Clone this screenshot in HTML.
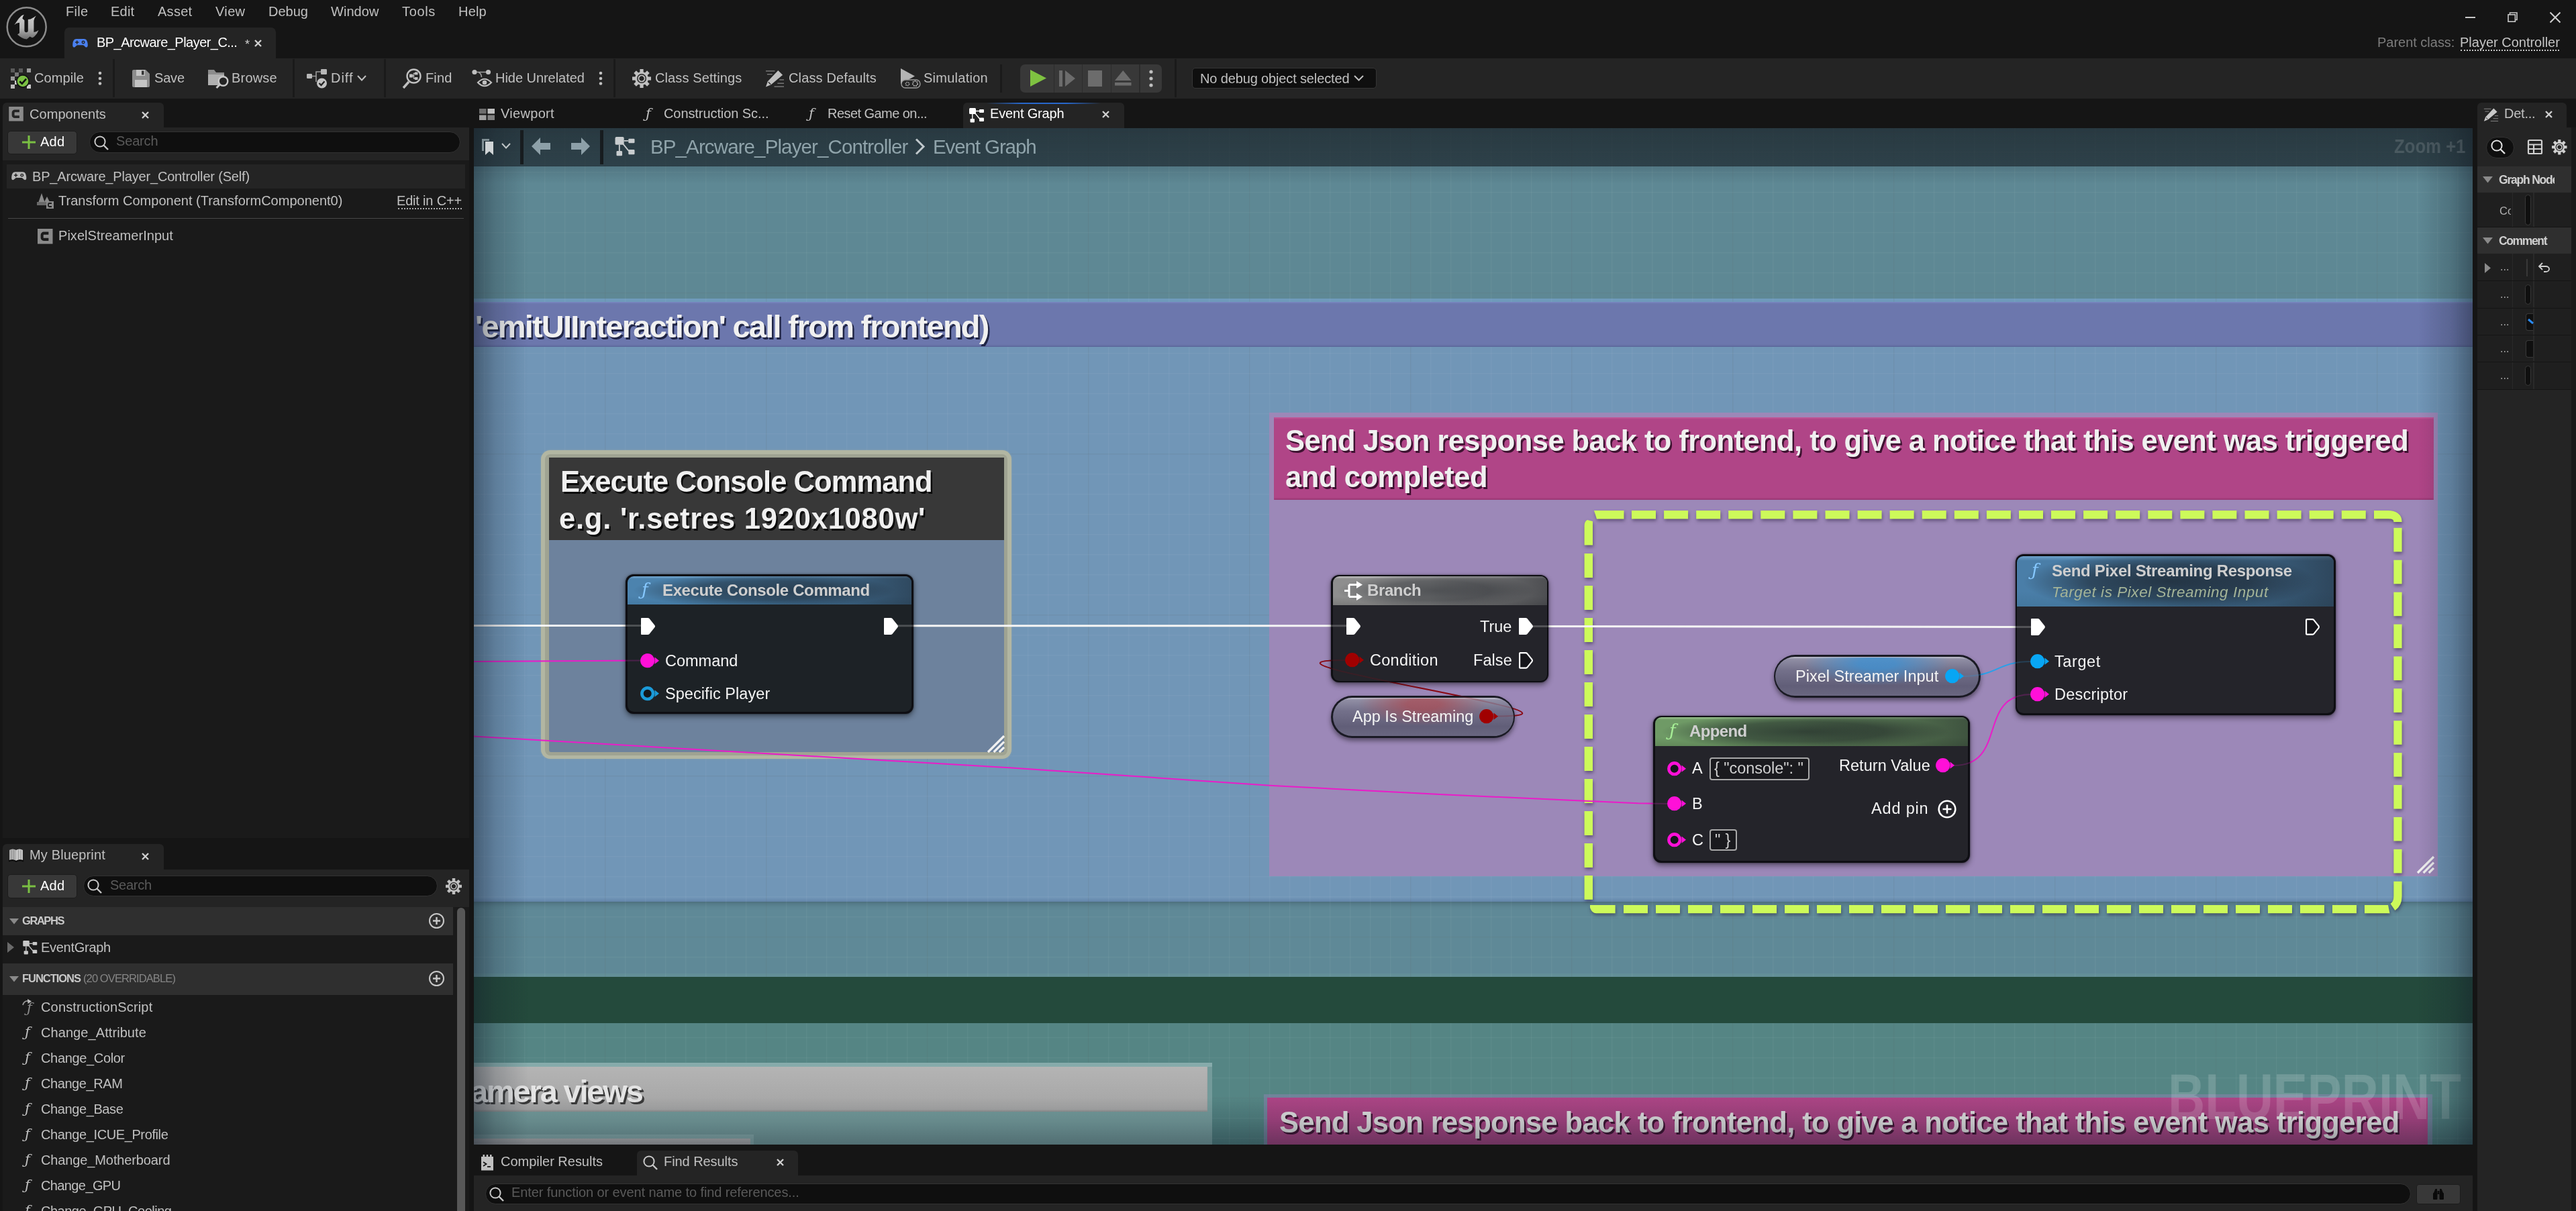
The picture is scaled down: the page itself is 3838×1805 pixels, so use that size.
<!DOCTYPE html>
<html><head><meta charset="utf-8"><title>BP_Arcware_Player_Controller</title>
<style>
html,body{margin:0;padding:0;background:#151515;}
body{width:3838px;height:1805px;position:relative;overflow:hidden;font-family:"Liberation Sans",sans-serif;}
.a{position:absolute;box-sizing:border-box;}
.t{position:absolute;white-space:pre;font-family:"Liberation Sans",sans-serif;will-change:transform;}
svg{overflow:visible;}
</style></head><body>
<div class="a" style="left:0px;top:0px;width:3838px;height:87px;background:#151515;"></div>
<svg class="a" style="left:4px;top:4px;" width="72" height="72" viewBox="0 0 72 72"><defs><linearGradient id="lg1" x1="0" y1="0" x2="0" y2="1"><stop offset="0" stop-color="#d0d0d0"/><stop offset="0.55" stop-color="#b4b4b4"/><stop offset="1" stop-color="#6e6e6e"/></linearGradient></defs>
<circle cx="35.7" cy="36.3" r="29" fill="#151515" stroke="#8c8c8c" stroke-width="2.5"/>
<path d="M17.2 33.3 L20.2 29.1 Q24 23 27.9 19.6 Q30 18 31.8 17.7 Q29.6 21 29.4 23.8 L32.4 26.2 V41.6 Q32.6 44.3 35.1 44.3 Q37.8 44.3 37.8 41.6 V25 L41.6 24.4 Q46 22.5 49.9 19.6 Q46.6 23.5 46.4 26.8 V44 Q50.5 43.5 53.5 41 Q51.5 46.5 47.6 49.9 Q45.8 51.6 44 52.3 L40.4 50.5 Q38 53 35.7 54.4 Q31.5 54.2 28.5 52.3 Q24.5 50 22 47.6 L25 45.2 V29.7 Q22.6 29.9 20.2 30.9 Z" fill="url(#lg1)"/></svg>
<span class="t" style="left:98.20px;top:7.07px;font-size:20px;line-height:20px;color:#c0c0c0;letter-spacing:0.293px;">File</span>
<span class="t" style="left:165.20px;top:7.07px;font-size:20px;line-height:20px;color:#c0c0c0;letter-spacing:0.234px;">Edit</span>
<span class="t" style="left:235.20px;top:7.07px;font-size:20px;line-height:20px;color:#c0c0c0;letter-spacing:0.276px;">Asset</span>
<span class="t" style="left:321.20px;top:7.07px;font-size:20px;line-height:20px;color:#c0c0c0;letter-spacing:0.353px;">View</span>
<span class="t" style="left:400.20px;top:7.07px;font-size:20px;line-height:20px;color:#c0c0c0;letter-spacing:-0.008px;">Debug</span>
<span class="t" style="left:493.20px;top:7.07px;font-size:20px;line-height:20px;color:#c0c0c0;letter-spacing:0.044px;">Window</span>
<span class="t" style="left:599.20px;top:7.07px;font-size:20px;line-height:20px;color:#c0c0c0;letter-spacing:0.642px;">Tools</span>
<span class="t" style="left:683.20px;top:7.07px;font-size:20px;line-height:20px;color:#c0c0c0;letter-spacing:0.191px;">Help</span>
<div class="a" style="left:96px;top:41px;width:315px;height:47px;background:#242424;border-radius:7px 7px 0 0;"></div>
<svg class="a" style="left:108px;top:57px;" width="23" height="14.5" viewBox="0 0 24 15"><path d="M6 1 H18 C21.5 1 23 4 23.6 8 C24.2 12 23.5 14 21.5 14 C19.5 14 18.5 11 16.5 10.5 H7.5 C5.5 11 4.5 14 2.5 14 C0.5 14 -0.2 12 0.4 8 C1 4 2.5 1 6 1 Z" fill="#4a80f0"/><path d="M6.2 3.5 v2 h-2 v1.6 h2 v2 h1.6 v-2 h2 v-1.6 h-2 v-2 z" fill="#242424"/><circle cx="16.8" cy="6.3" r="2.6" fill="#242424"/><circle cx="16.8" cy="6.3" r="1.1" fill="#4a80f0"/></svg>
<span class="t" style="left:144.20px;top:53.07px;font-size:20px;line-height:20px;color:#ffffff;letter-spacing:-0.537px;">BP_Arcware_Player_C...</span>
<span class="t" style="left:365.00px;top:56.76px;font-size:18px;line-height:18px;color:#d0d0d0;">*</span>
<svg class="a" style="left:379.5px;top:59.5px;" width="9.0" height="9.0" viewBox="0 0 9.0 9.0"><path d="M0 0 L9.0 9.0 M9.0 0 L0 9.0" stroke="#d0d0d0" stroke-width="2.4" fill="none"/></svg>
<svg class="a" style="left:3673px;top:25px;" width="15" height="2" viewBox="0 0 15 2"><rect width="15" height="2" fill="#c8c8c8"/></svg>
<svg class="a" style="left:3736px;top:18px;" width="15" height="15" viewBox="0 0 15 15"><path d="M3.5 3.5 V1 H14 V11.5 H11.5" fill="none" stroke="#c8c8c8" stroke-width="1.6"/><rect x="1" y="3.8" width="10.4" height="10.4" fill="none" stroke="#c8c8c8" stroke-width="1.6"/></svg>
<svg class="a" style="left:3799px;top:18px;" width="16" height="16" viewBox="0 0 16 16"><path d="M0.5 0.5 L15.5 15.5 M15.5 0.5 L0.5 15.5" stroke="#d0d0d0" stroke-width="2" fill="none"/></svg>
<span class="t" style="left:3541.70px;top:53.07px;font-size:20px;line-height:20px;color:#7c7c7c;letter-spacing:-0.016px;">Parent class:</span>
<span class="t" style="left:3665.20px;top:53.07px;font-size:20px;line-height:20px;color:#c4c4c4;letter-spacing:-0.003px;">Player Controller</span>
<div class="a" style="left:3666px;top:74px;width:147px;height:0px;background:transparent;border-top:2px dotted #c4c4c4;"></div>
<div class="a" style="left:0px;top:87px;width:3838px;height:60px;background:#242424;"></div>
<div class="a" style="left:168.0px;top:88px;width:3px;height:57px;background:#1a1a1a;"></div>
<div class="a" style="left:436.0px;top:88px;width:3px;height:57px;background:#1a1a1a;"></div>
<div class="a" style="left:571.5px;top:88px;width:3px;height:57px;background:#1a1a1a;"></div>
<div class="a" style="left:914.0px;top:88px;width:3px;height:57px;background:#1a1a1a;"></div>
<div class="a" style="left:1749.5px;top:88px;width:3px;height:57px;background:#1a1a1a;"></div>
<div class="a" style="left:1489.5px;top:96px;width:3px;height:42px;background:#1a1a1a;"></div>
<svg class="a" style="left:16px;top:102px;" width="30" height="30" viewBox="0 0 30 30"><g fill="#9a9a9a"><rect x="0" y="0" width="6" height="6" fill="#5a5a5a"/><rect x="12" y="0" width="6" height="6" fill="#5a5a5a"/><rect x="24" y="0" width="6" height="6"/><rect x="6" y="6" width="6" height="6" fill="#777"/><rect x="0" y="12" width="6" height="6"/><rect x="0" y="24" width="6" height="6" fill="#bbb"/><rect x="24" y="24" width="6" height="6" fill="#ccc"/><rect x="6" y="18" width="6" height="6" fill="#ccc"/></g>
<circle cx="18" cy="19" r="10" fill="#111"/><circle cx="18" cy="19" r="8.3" fill="#7ac043"/><path d="M13.3 19.3 L16.8 22.6 L23 15.6" fill="none" stroke="#111" stroke-width="2.6"/></svg>
<span class="t" style="left:51.20px;top:105.57px;font-size:20px;line-height:20px;color:#c0c0c0;letter-spacing:0.077px;">Compile</span>
<svg class="a" style="left:145.5px;top:106px;" width="6" height="21.5" viewBox="0 0 6 21.5"><circle cx="3" cy="3" r="2.3" fill="#c0c0c0"/><circle cx="3" cy="11" r="2.3" fill="#c0c0c0"/><circle cx="3" cy="18.5" r="2.3" fill="#c0c0c0"/></svg>
<svg class="a" style="left:197px;top:104px;" width="26" height="26" viewBox="0 0 26 26"><path d="M0 2 a2 2 0 0 1 2 -2 H20 L26 6 V24 a2 2 0 0 1 -2 2 H2 a2 2 0 0 1 -2 -2 Z" fill="#8c8c8c"/><rect x="6" y="0" width="13" height="9" fill="#c4c4c4"/><rect x="14" y="1.5" width="3.5" height="6" fill="#333"/><rect x="4" y="15" width="18" height="11" fill="#c4c4c4"/></svg>
<span class="t" style="left:230.20px;top:105.57px;font-size:20px;line-height:20px;color:#c0c0c0;letter-spacing:-0.172px;">Save</span>
<svg class="a" style="left:309.5px;top:101px;" width="31" height="31" viewBox="0 0 31 31"><path d="M0 3 H9 L12 7 H24 V26 H0 Z" fill="#8c8c8c"/><path d="M0 10 H24 V26 H0 Z" fill="#b0b0b0"/><circle cx="22.5" cy="20" r="6.8" fill="#242424" stroke="#c8c8c8" stroke-width="2.4"/><path d="M17.5 25 L12.5 30" stroke="#c8c8c8" stroke-width="3"/></svg>
<span class="t" style="left:345.20px;top:105.57px;font-size:20px;line-height:20px;color:#c0c0c0;letter-spacing:0.202px;">Browse</span>
<svg class="a" style="left:457px;top:102px;" width="31" height="30" viewBox="0 0 31 30"><rect x="0" y="8" width="8" height="7" rx="1.2" fill="#b8b8b8"/><rect x="21" y="1" width="9" height="8" rx="1.2" fill="#b8b8b8"/><path d="M8 11.5 H14 V5 H21" stroke="#9a9a9a" stroke-width="1.6" fill="none"/><path d="M14 11.5 V20" stroke="#9a9a9a" stroke-width="1.6"/><circle cx="22.5" cy="22" r="7.5" fill="#c4c4c4"/><path d="M18.5 22 L21.5 25 L26.5 19.2" stroke="#242424" stroke-width="2.4" fill="none"/></svg>
<span class="t" style="left:492.70px;top:105.57px;font-size:20px;line-height:20px;color:#c0c0c0;letter-spacing:0.940px;">Diff</span>
<svg class="a" style="left:532px;top:112px;" width="14" height="9" viewBox="0 0 14 9"><path d="M1 1 L7 7.5 L13 1" stroke="#c0c0c0" stroke-width="2" fill="none"/></svg>
<svg class="a" style="left:599.5px;top:102px;" width="28" height="30" viewBox="0 0 28 30"><circle cx="16.5" cy="11.5" r="10" fill="none" stroke="#c0c0c0" stroke-width="2.4"/><path d="M9 20 L1 29" stroke="#c0c0c0" stroke-width="3.4"/><rect x="10" y="8.5" width="5" height="5" fill="#c0c0c0"/><rect x="18" y="5.5" width="4.5" height="4" fill="#c0c0c0"/><rect x="18" y="13" width="4.5" height="4" fill="#c0c0c0"/><path d="M15 11 H16.5 V7.5 H18 M16.5 11 V15 H18" stroke="#c0c0c0" stroke-width="1.3" fill="none"/></svg>
<span class="t" style="left:634.20px;top:105.57px;font-size:20px;line-height:20px;color:#c0c0c0;letter-spacing:0.123px;">Find</span>
<svg class="a" style="left:703px;top:103px;" width="30" height="28" viewBox="0 0 30 28"><circle cx="4" cy="4.5" r="3.6" fill="#c0c0c0"/><circle cx="24.5" cy="4.5" r="3.6" fill="#c0c0c0"/><path d="M7 4.5 H21 M10 5 Q14 6 14.5 12" stroke="#a0a0a0" stroke-width="1.6" fill="none"/><path d="M9 20 Q19 9.5 29 20 Q19 30.5 9 20 Z" fill="none" stroke="#c0c0c0" stroke-width="2.2"/><circle cx="19" cy="20" r="3.3" fill="#c0c0c0"/></svg>
<span class="t" style="left:738.20px;top:105.57px;font-size:20px;line-height:20px;color:#c0c0c0;letter-spacing:-0.037px;">Hide Unrelated</span>
<svg class="a" style="left:891.5px;top:106px;" width="6" height="21.5" viewBox="0 0 6 21.5"><circle cx="3" cy="3" r="2.3" fill="#c0c0c0"/><circle cx="3" cy="11" r="2.3" fill="#c0c0c0"/><circle cx="3" cy="18.5" r="2.3" fill="#c0c0c0"/></svg>
<svg class="a" style="left:942px;top:103px;" width="28" height="28" viewBox="0 0 28 28"><g transform="translate(14 14)" fill="#c0c0c0"><rect x="-2.6" y="-14" width="5.2" height="6" transform="rotate(0)" /><rect x="-2.6" y="-14" width="5.2" height="6" transform="rotate(45)" /><rect x="-2.6" y="-14" width="5.2" height="6" transform="rotate(90)" /><rect x="-2.6" y="-14" width="5.2" height="6" transform="rotate(135)" /><rect x="-2.6" y="-14" width="5.2" height="6" transform="rotate(180)" /><rect x="-2.6" y="-14" width="5.2" height="6" transform="rotate(225)" /><rect x="-2.6" y="-14" width="5.2" height="6" transform="rotate(270)" /><rect x="-2.6" y="-14" width="5.2" height="6" transform="rotate(315)" /><circle r="10"/><circle r="7" fill="#242424"/><circle r="4.6" fill="none" stroke="#c0c0c0" stroke-width="1.8"/></g></svg>
<span class="t" style="left:975.70px;top:105.57px;font-size:20px;line-height:20px;color:#c0c0c0;letter-spacing:0.112px;">Class Settings</span>
<svg class="a" style="left:1140px;top:103px;" width="29" height="28" viewBox="0 0 30 29"><path d="M20 2 L27 9 L9 24 L1 27.5 L4 19 Z" fill="#c0c0c0"/><path d="M5 20 L8.5 23.5" stroke="#242424" stroke-width="1.3"/><g stroke="#7a7a7a" stroke-width="1.5"><path d="M1 3 H15"/><path d="M3 8 H11"/><path d="M19 22 H29"/><path d="M14 27 H29"/><path d="M22 16.5 H29"/></g></svg>
<span class="t" style="left:1174.70px;top:105.57px;font-size:20px;line-height:20px;color:#c0c0c0;letter-spacing:0.140px;">Class Defaults</span>
<svg class="a" style="left:1340.5px;top:102px;" width="31" height="30" viewBox="0 0 31 30"><path d="M1 0 L22 11.5 L1 23 Z" fill="#b4b4b4"/><rect x="2" y="17" width="28" height="12" rx="6" fill="#242424" stroke="#9a9a9a" stroke-width="1.4"/><circle cx="11" cy="23" r="2.6" fill="none" stroke="#b4b4b4" stroke-width="1.5" stroke-dasharray="1.6 1"/><circle cx="22.5" cy="22.5" r="3.6" fill="none" stroke="#b4b4b4" stroke-width="1.8" stroke-dasharray="2 1.1"/></svg>
<span class="t" style="left:1376.20px;top:105.57px;font-size:20px;line-height:20px;color:#c0c0c0;letter-spacing:0.252px;">Simulation</span>
<div class="a" style="left:1520px;top:96px;width:211px;height:42px;background:#383838;border-radius:7px;"></div>
<div class="a" style="left:1569.5px;top:96px;width:1.5px;height:42px;background:#2c2c2c;"></div>
<div class="a" style="left:1611.5px;top:96px;width:1.5px;height:42px;background:#2c2c2c;"></div>
<div class="a" style="left:1654.5px;top:96px;width:1.5px;height:42px;background:#2c2c2c;"></div>
<div class="a" style="left:1697.0px;top:96px;width:1.5px;height:42px;background:#2c2c2c;"></div>
<svg class="a" style="left:1535px;top:104px;" width="24" height="25" viewBox="0 0 24 25"><path d="M0 0 L24 12.5 L0 25 Z" fill="#7fc241"/></svg>
<svg class="a" style="left:1578px;top:105px;" width="24" height="24" viewBox="0 0 24 24"><rect x="0" y="0" width="5" height="24" fill="#6c6c6c"/><path d="M9 0 L24 12 L9 24 Z" fill="#6c6c6c"/></svg>
<div class="a" style="left:1620.5px;top:105px;width:21.5px;height:24px;background:#6c6c6c;"></div>
<svg class="a" style="left:1660.5px;top:105px;" width="24.5" height="23" viewBox="0 0 24.5 23"><path d="M12.25 0 L24.5 15 H0 Z" fill="#6c6c6c"/><rect x="0" y="18" width="24.5" height="4.5" fill="#6c6c6c"/></svg>
<svg class="a" style="left:1711.5px;top:104px;" width="6" height="26" viewBox="0 0 6 26"><circle cx="3" cy="3" r="2.6" fill="#c0c0c0"/><circle cx="3" cy="13" r="2.6" fill="#c0c0c0"/><circle cx="3" cy="23" r="2.6" fill="#c0c0c0"/></svg>
<div class="a" style="left:1776px;top:100.5px;width:274.5px;height:31.5px;background:#0f0f0f;border:1.5px solid #353535;border-radius:5px;"></div>
<span class="t" style="left:1787.70px;top:107.07px;font-size:20px;line-height:20px;color:#c0c0c0;letter-spacing:-0.138px;">No debug object selected</span>
<svg class="a" style="left:2017px;top:112px;" width="15" height="9" viewBox="0 0 15 9"><path d="M1 1 L7.5 7.5 L14 1" stroke="#c0c0c0" stroke-width="2" fill="none"/></svg>
<div class="a" style="left:4px;top:153px;width:240px;height:38px;background:#242424;border-radius:6px 6px 0 0;"></div>
<svg class="a" style="left:13px;top:159px;" width="22" height="21.5" viewBox="0 0 22 22"><rect width="22" height="22" fill="#8a8a8a"/><path d="M16 6.5 H9 a2.5 2.5 0 0 0 -2.5 2.5 V13 a2.5 2.5 0 0 0 2.5 2.5 H16" fill="none" stroke="#242424" stroke-width="4"/><rect x="14.5" y="0" width="3" height="22" fill="#242424" opacity="0"/><rect x="17.5" y="9" width="4.5" height="4" fill="#242424" opacity="0"/></svg>
<span class="t" style="left:44.20px;top:160.07px;font-size:20px;line-height:20px;color:#c0c0c0;letter-spacing:0.050px;">Components</span>
<svg class="a" style="left:212.0px;top:166.5px;" width="9.0" height="9.0" viewBox="0 0 9.0 9.0"><path d="M0 0 L9.0 9.0 M9.0 0 L0 9.0" stroke="#d0d0d0" stroke-width="2.4" fill="none"/></svg>
<div class="a" style="left:4px;top:190px;width:695px;height:49px;background:#242424;"></div>
<div class="a" style="left:4px;top:239px;width:695px;height:1010px;background:#1a1a1a;"></div>
<div class="a" style="left:11px;top:194.5px;width:104px;height:35px;background:#383838;border-radius:5px;border:1px solid #1c1c1c;"></div>
<svg class="a" style="left:33px;top:202.0px;" width="20" height="20" viewBox="0 0 20 20"><path d="M10 0 V20 M0 10 H20" stroke="#7ac043" stroke-width="3"/></svg>
<span class="t" style="left:59.70px;top:201.27px;font-size:20px;line-height:20px;color:#ffffff;letter-spacing:0.271px;">Add</span>
<div class="a" style="left:133px;top:196px;width:553px;height:32px;background:#0f0f0f;border:1.5px solid #323232;border-radius:16.0px;"></div>
<svg class="a" style="left:140px;top:201.5px;" width="22" height="22" viewBox="0 0 22 22"><circle cx="9" cy="9" r="7.6" fill="none" stroke="#c8c8c8" stroke-width="2"/><path d="M14.5 14.5 L21 21" stroke="#c8c8c8" stroke-width="2.4"/></svg>
<span class="t" style="left:173.20px;top:200.37px;font-size:20px;line-height:20px;color:#5a5a5a;letter-spacing:-0.162px;">Search</span>
<div class="a" style="left:10px;top:245px;width:683px;height:35.5px;background:#242424;"></div>
<svg class="a" style="left:16.5px;top:255px;" width="22.5" height="14.5" viewBox="0 0 24 15"><path d="M6 1 H18 C21.5 1 23 4 23.6 8 C24.2 12 23.5 14 21.5 14 C19.5 14 18.5 11 16.5 10.5 H7.5 C5.5 11 4.5 14 2.5 14 C0.5 14 -0.2 12 0.4 8 C1 4 2.5 1 6 1 Z" fill="#b8b8b8"/><path d="M6.2 3.5 v2 h-2 v1.6 h2 v2 h1.6 v-2 h2 v-1.6 h-2 v-2 z" fill="#242424"/><circle cx="16.8" cy="6.3" r="2.6" fill="#242424"/><circle cx="16.8" cy="6.3" r="1.1" fill="#b8b8b8"/></svg>
<span class="t" style="left:48.20px;top:253.07px;font-size:20px;line-height:20px;color:#c0c0c0;letter-spacing:-0.178px;">BP_Arcware_Player_Controller (Self)</span>
<svg class="a" style="left:55px;top:288px;" width="25" height="24" viewBox="0 0 25 24"><path d="M7 0 L11.5 13 H2.5 Z" fill="#8a8a8a"/><path d="M15 5 L19 13 H11 Z" fill="#8a8a8a"/><rect x="0" y="13" width="14" height="5" fill="#6a6a6a"/><rect x="14" y="12" width="11" height="11" fill="#8a8a8a"/><path d="M22 15 H18.5 a1.5 1.5 0 0 0 -1.5 1.5 V18.5 a1.5 1.5 0 0 0 1.5 1.5 H22" fill="none" stroke="#1a1a1a" stroke-width="1.8"/></svg>
<span class="t" style="left:87.30px;top:288.77px;font-size:20px;line-height:20px;color:#c0c0c0;letter-spacing:0.007px;">Transform Component (TransformComponent0)</span>
<span class="t" style="left:591.20px;top:288.77px;font-size:20px;line-height:20px;color:#c0c0c0;letter-spacing:-0.186px;">Edit in C++</span>
<div class="a" style="left:592.5px;top:310px;width:95px;height:0px;background:transparent;border-top:2px dotted #b0b0b0;"></div>
<div class="a" style="left:12px;top:325px;width:679px;height:1px;background:#484848;"></div>
<svg class="a" style="left:56px;top:340.5px;" width="22.5" height="22.5" viewBox="0 0 22 22"><rect width="22" height="22" fill="#8a8a8a"/><path d="M16 6.5 H9 a2.5 2.5 0 0 0 -2.5 2.5 V13 a2.5 2.5 0 0 0 2.5 2.5 H16" fill="none" stroke="#1a1a1a" stroke-width="4"/><rect x="14.5" y="0" width="3" height="22" fill="#1a1a1a" opacity="0"/><rect x="17.5" y="9" width="4.5" height="4" fill="#1a1a1a" opacity="0"/></svg>
<span class="t" style="left:87.30px;top:340.77px;font-size:20px;line-height:20px;color:#c0c0c0;letter-spacing:0.045px;">PixelStreamerInput</span>
<div class="a" style="left:4px;top:1258px;width:240px;height:38px;background:#242424;border-radius:6px 6px 0 0;"></div>
<svg class="a" style="left:12.5px;top:1264px;" width="22" height="21" viewBox="0 0 22 21"><path d="M1 3 Q6 0 11 3 V19 Q6 16 1 19 Z" fill="#b0b0b0"/><path d="M21 3 Q16 0 11 3 V19 Q16 16 21 19 Z" fill="#c8c8c8"/><path d="M0 19.5 Q6 17 11 20 Q16 17 22 19.5" fill="none" stroke="#0a0a0a" stroke-width="2"/><g stroke="#8a8a8a" stroke-width="0.8"><path d="M4 3 V17 M7.5 2.6 V17 M14.5 2.6 V17 M18 3 V17"/></g></svg>
<span class="t" style="left:44.20px;top:1264.07px;font-size:20px;line-height:20px;color:#c0c0c0;letter-spacing:0.145px;">My Blueprint</span>
<svg class="a" style="left:212.0px;top:1271.5px;" width="9.0" height="9.0" viewBox="0 0 9.0 9.0"><path d="M0 0 L9.0 9.0 M9.0 0 L0 9.0" stroke="#d0d0d0" stroke-width="2.4" fill="none"/></svg>
<div class="a" style="left:4px;top:1295.5px;width:695px;height:56.5px;background:#242424;"></div>
<div class="a" style="left:4px;top:1352px;width:695px;height:453px;background:#1a1a1a;"></div>
<div class="a" style="left:11px;top:1303px;width:104px;height:36px;background:#383838;border-radius:5px;border:1px solid #1c1c1c;"></div>
<svg class="a" style="left:33px;top:1311.0px;" width="20" height="20" viewBox="0 0 20 20"><path d="M10 0 V20 M0 10 H20" stroke="#7ac043" stroke-width="3"/></svg>
<span class="t" style="left:59.70px;top:1310.27px;font-size:20px;line-height:20px;color:#ffffff;letter-spacing:0.271px;">Add</span>
<div class="a" style="left:124px;top:1305px;width:528px;height:31px;background:#0f0f0f;border:1.5px solid #323232;border-radius:15.5px;"></div>
<svg class="a" style="left:129.5px;top:1310.0px;" width="22" height="22" viewBox="0 0 22 22"><circle cx="9" cy="9" r="7.6" fill="none" stroke="#c8c8c8" stroke-width="2"/><path d="M14.5 14.5 L21 21" stroke="#c8c8c8" stroke-width="2.4"/></svg>
<span class="t" style="left:163.70px;top:1308.87px;font-size:20px;line-height:20px;color:#5a5a5a;letter-spacing:-0.245px;">Search</span>
<svg class="a" style="left:663.5px;top:1308.5px;" width="24" height="24" viewBox="0 0 28 28"><g transform="translate(14 14)" fill="#c0c0c0"><rect x="-2.6" y="-14" width="5.2" height="6" transform="rotate(0)" /><rect x="-2.6" y="-14" width="5.2" height="6" transform="rotate(45)" /><rect x="-2.6" y="-14" width="5.2" height="6" transform="rotate(90)" /><rect x="-2.6" y="-14" width="5.2" height="6" transform="rotate(135)" /><rect x="-2.6" y="-14" width="5.2" height="6" transform="rotate(180)" /><rect x="-2.6" y="-14" width="5.2" height="6" transform="rotate(225)" /><rect x="-2.6" y="-14" width="5.2" height="6" transform="rotate(270)" /><rect x="-2.6" y="-14" width="5.2" height="6" transform="rotate(315)" /><circle r="10"/><circle r="7" fill="#242424"/><circle r="4.6" fill="none" stroke="#c0c0c0" stroke-width="1.8"/></g></svg>
<div class="a" style="left:680.5px;top:1352.5px;width:12px;height:460px;background:#575757;border-radius:6px;"></div>
<div class="a" style="left:4px;top:1352px;width:670.5px;height:42px;background:#2f2f2f;"></div>
<svg class="a" style="left:14px;top:1369px;" width="14" height="8.5" viewBox="0 0 14 8.5"><path d="M0 0 H14 L7.0 8.5 Z" fill="#8a8a8a"/></svg>
<span class="t" style="left:32.93px;top:1364.03px;font-size:16.5px;line-height:16.5px;color:#c8c8c8;letter-spacing:-1.436px;font-weight:700;">GRAPHS</span>
<svg class="a" style="left:639.2px;top:1361.0px;" width="23.0" height="23.0" viewBox="0 0 23.0 23.0"><circle cx="11.5" cy="11.5" r="10.5" fill="none" stroke="#c8c8c8" stroke-width="2"/><path d="M11.5 6.0 V17.0 M6.0 11.5 H17.0" stroke="#c8c8c8" stroke-width="2.4"/></svg>
<svg class="a" style="left:11px;top:1402px;" width="10" height="20" viewBox="0 0 10 20"><path d="M0 2 L10 10 L0 18 Z" fill="#6a6a6a"/></svg>
<svg class="a" style="left:34px;top:1402px;" width="21.5" height="21" viewBox="0 0 22 22"><rect x="0" y="0" width="10" height="9" rx="1.5" fill="#c8c8c8"/><rect x="15" y="2" width="7" height="5" rx="1" fill="#c8c8c8"/><rect x="1.5" y="16" width="6.5" height="5.5" rx="1" fill="#c8c8c8"/><rect x="15" y="14.5" width="7" height="5.5" rx="1" fill="#c8c8c8"/><path d="M10 4.5 H15 M4.8 9 V16 M9 8 L15.5 16" stroke="#c8c8c8" stroke-width="1.4" fill="none"/></svg>
<span class="t" style="left:60.70px;top:1402.07px;font-size:20px;line-height:20px;color:#c0c0c0;letter-spacing:-0.283px;">EventGraph</span>
<div class="a" style="left:4px;top:1435.5px;width:670.5px;height:47px;background:#2f2f2f;"></div>
<svg class="a" style="left:14px;top:1455px;" width="14" height="8.5" viewBox="0 0 14 8.5"><path d="M0 0 H14 L7.0 8.5 Z" fill="#8a8a8a"/></svg>
<span class="t" style="left:32.93px;top:1449.83px;font-size:16.5px;line-height:16.5px;color:#c8c8c8;letter-spacing:-1.030px;font-weight:700;">FUNCTIONS</span>
<span class="t" style="left:123.93px;top:1449.83px;font-size:16.5px;line-height:16.5px;color:#858585;letter-spacing:-0.895px;">(20 OVERRIDABLE)</span>
<svg class="a" style="left:639.2px;top:1447.0px;" width="23.0" height="23.0" viewBox="0 0 23.0 23.0"><circle cx="11.5" cy="11.5" r="10.5" fill="none" stroke="#c8c8c8" stroke-width="2"/><path d="M11.5 6.0 V17.0 M6.0 11.5 H17.0" stroke="#c8c8c8" stroke-width="2.4"/></svg>
<svg class="a" style="left:33px;top:1488.7px;" width="14" height="10" viewBox="0 0 14 10"><path d="M1 9 Q3 2 10 3" fill="none" stroke="#9a9a9a" stroke-width="1.8"/><path d="M8 0 L14 3.5 L8.5 7 Z" fill="#c0c0c0"/></svg>
<span class="t" style="left:40.00px;top:1492.42px;font-size:21.0px;line-height:21.0px;color:#8a8a8a;font-style:italic;font-family:'DejaVu Serif','Liberation Serif',serif;">ƒ</span>
<span class="t" style="left:60.70px;top:1490.57px;font-size:20px;line-height:20px;color:#c0c0c0;letter-spacing:0.166px;">ConstructionScript</span>
<span class="t" style="left:37.00px;top:1528.42px;font-size:21.0px;line-height:21.0px;color:#c0c0c0;font-style:italic;font-family:'DejaVu Serif','Liberation Serif',serif;">ƒ</span>
<span class="t" style="left:60.70px;top:1528.57px;font-size:20px;line-height:20px;color:#c0c0c0;letter-spacing:0.077px;">Change_Attribute</span>
<span class="t" style="left:37.00px;top:1566.42px;font-size:21.0px;line-height:21.0px;color:#c0c0c0;font-style:italic;font-family:'DejaVu Serif','Liberation Serif',serif;">ƒ</span>
<span class="t" style="left:60.70px;top:1566.57px;font-size:20px;line-height:20px;color:#c0c0c0;letter-spacing:-0.340px;">Change_Color</span>
<span class="t" style="left:37.00px;top:1604.42px;font-size:21.0px;line-height:21.0px;color:#c0c0c0;font-style:italic;font-family:'DejaVu Serif','Liberation Serif',serif;">ƒ</span>
<span class="t" style="left:60.70px;top:1604.57px;font-size:20px;line-height:20px;color:#c0c0c0;letter-spacing:-0.423px;">Change_RAM</span>
<span class="t" style="left:37.00px;top:1642.42px;font-size:21.0px;line-height:21.0px;color:#c0c0c0;font-style:italic;font-family:'DejaVu Serif','Liberation Serif',serif;">ƒ</span>
<span class="t" style="left:60.70px;top:1642.57px;font-size:20px;line-height:20px;color:#c0c0c0;letter-spacing:-0.397px;">Change_Base</span>
<span class="t" style="left:37.00px;top:1680.42px;font-size:21.0px;line-height:21.0px;color:#c0c0c0;font-style:italic;font-family:'DejaVu Serif','Liberation Serif',serif;">ƒ</span>
<span class="t" style="left:60.70px;top:1680.57px;font-size:20px;line-height:20px;color:#c0c0c0;letter-spacing:-0.389px;">Change_ICUE_Profile</span>
<span class="t" style="left:37.00px;top:1718.42px;font-size:21.0px;line-height:21.0px;color:#c0c0c0;font-style:italic;font-family:'DejaVu Serif','Liberation Serif',serif;">ƒ</span>
<span class="t" style="left:60.70px;top:1718.57px;font-size:20px;line-height:20px;color:#c0c0c0;letter-spacing:-0.121px;">Change_Motherboard</span>
<span class="t" style="left:37.00px;top:1756.42px;font-size:21.0px;line-height:21.0px;color:#c0c0c0;font-style:italic;font-family:'DejaVu Serif','Liberation Serif',serif;">ƒ</span>
<span class="t" style="left:60.70px;top:1756.57px;font-size:20px;line-height:20px;color:#c0c0c0;letter-spacing:-0.613px;">Change_GPU</span>
<span class="t" style="left:37.00px;top:1794.42px;font-size:21.0px;line-height:21.0px;color:#c0c0c0;font-style:italic;font-family:'DejaVu Serif','Liberation Serif',serif;">ƒ</span>
<span class="t" style="left:60.70px;top:1794.57px;font-size:20px;line-height:20px;color:#c0c0c0;letter-spacing:-0.504px;">Change_GPU_Cooling</span>
<svg class="a" style="left:714px;top:162px;" width="23" height="17" viewBox="0 0 23 17"><rect x="0" y="0" width="10.5" height="7.5" fill="#6e6e6e"/><rect x="12.5" y="0" width="10.5" height="7.5" fill="#c0c0c0"/><rect x="0" y="9.5" width="10.5" height="7.5" fill="#a0a0a0"/><rect x="12.5" y="9.5" width="10.5" height="7.5" fill="#808080"/></svg>
<span class="t" style="left:746.20px;top:159.07px;font-size:20px;line-height:20px;color:#c0c0c0;letter-spacing:0.306px;">Viewport</span>
<span class="t" style="left:962.00px;top:158.72px;font-size:21.0px;line-height:21.0px;color:#c0c0c0;font-style:italic;font-family:'DejaVu Serif','Liberation Serif',serif;">ƒ</span>
<span class="t" style="left:988.70px;top:159.07px;font-size:20px;line-height:20px;color:#c0c0c0;letter-spacing:-0.080px;">Construction Sc...</span>
<span class="t" style="left:1205.00px;top:158.72px;font-size:21.0px;line-height:21.0px;color:#c0c0c0;font-style:italic;font-family:'DejaVu Serif','Liberation Serif',serif;">ƒ</span>
<span class="t" style="left:1232.70px;top:159.07px;font-size:20px;line-height:20px;color:#c0c0c0;letter-spacing:-0.553px;">Reset Game on...</span>
<div class="a" style="left:1435px;top:153px;width:240px;height:38px;background:#242424;border-radius:6px 6px 0 0;"></div>
<div class="a" style="left:1470px;top:153px;width:170px;height:1.5px;background:linear-gradient(90deg,rgba(40,110,220,0),rgba(40,110,220,.9) 30%,rgba(40,110,220,.9) 70%,rgba(40,110,220,0));"></div>
<svg class="a" style="left:1444px;top:160.5px;" width="22" height="22" viewBox="0 0 22 22"><rect x="0" y="0" width="10" height="9" rx="1.5" fill="#ffffff"/><rect x="15" y="2" width="7" height="5" rx="1" fill="#ffffff"/><rect x="1.5" y="16" width="6.5" height="5.5" rx="1" fill="#ffffff"/><rect x="15" y="14.5" width="7" height="5.5" rx="1" fill="#ffffff"/><path d="M10 4.5 H15 M4.8 9 V16 M9 8 L15.5 16" stroke="#ffffff" stroke-width="1.4" fill="none"/></svg>
<span class="t" style="left:1474.70px;top:159.07px;font-size:20px;line-height:20px;color:#ffffff;letter-spacing:-0.172px;">Event Graph</span>
<svg class="a" style="left:1643.0px;top:166.0px;" width="9.0" height="9.0" viewBox="0 0 9.0 9.0"><path d="M0 0 L9.0 9.0 M9.0 0 L0 9.0" stroke="#d0d0d0" stroke-width="2.4" fill="none"/></svg>
<div class="a" style="left:3691px;top:153px;width:133px;height:38px;background:#242424;border-radius:6px 6px 0 0;"></div>
<svg class="a" style="left:3699.5px;top:160px;" width="23" height="22" viewBox="0 0 30 29"><path d="M20 2 L27 9 L9 24 L1 27.5 L4 19 Z" fill="#c8c8c8"/><path d="M5 20 L8.5 23.5" stroke="#242424" stroke-width="1.3"/><g stroke="#7a7a7a" stroke-width="1.5"><path d="M1 3 H15"/><path d="M3 8 H11"/><path d="M19 22 H29"/><path d="M14 27 H29"/><path d="M22 16.5 H29"/></g></svg>
<span class="t" style="left:3731.40px;top:159.07px;font-size:20px;line-height:20px;color:#c0c0c0;letter-spacing:-0.233px;">Det...</span>
<svg class="a" style="left:3792.9px;top:166.0px;" width="9.0" height="9.0" viewBox="0 0 9.0 9.0"><path d="M0 0 L9.0 9.0 M9.0 0 L0 9.0" stroke="#d0d0d0" stroke-width="2.4" fill="none"/></svg>
<div class="a" style="left:3691px;top:190px;width:140px;height:1615px;background:#242424;"></div>
<div class="a" style="left:3831px;top:190px;width:7px;height:1615px;background:#1a1a1a;"></div>
<div class="a" style="left:3703.5px;top:203.5px;width:42.5px;height:32px;background:#0f0f0f;border:1.5px solid #323232;border-radius:16px;"></div>
<svg class="a" style="left:3711px;top:208px;" width="22" height="22" viewBox="0 0 22 22"><circle cx="9" cy="9" r="7.6" fill="none" stroke="#e0e0e0" stroke-width="2"/><path d="M14.5 14.5 L21 21" stroke="#e0e0e0" stroke-width="2.4"/></svg>
<svg class="a" style="left:3766px;top:208px;" width="22" height="22" viewBox="0 0 22 22"><rect x="1" y="1" width="20" height="20" rx="1.5" fill="none" stroke="#d0d0d0" stroke-width="2.2"/><path d="M1 7.5 H21 M1 14 H21 M9 7.5 V21" stroke="#d0d0d0" stroke-width="2.2"/></svg>
<svg class="a" style="left:3802px;top:208px;" width="22.5" height="22.5" viewBox="0 0 28 28"><g transform="translate(14 14)" fill="#d0d0d0"><rect x="-2.6" y="-14" width="5.2" height="6" transform="rotate(0)" /><rect x="-2.6" y="-14" width="5.2" height="6" transform="rotate(45)" /><rect x="-2.6" y="-14" width="5.2" height="6" transform="rotate(90)" /><rect x="-2.6" y="-14" width="5.2" height="6" transform="rotate(135)" /><rect x="-2.6" y="-14" width="5.2" height="6" transform="rotate(180)" /><rect x="-2.6" y="-14" width="5.2" height="6" transform="rotate(225)" /><rect x="-2.6" y="-14" width="5.2" height="6" transform="rotate(270)" /><rect x="-2.6" y="-14" width="5.2" height="6" transform="rotate(315)" /><circle r="10"/><circle r="7" fill="#242424"/><circle r="4.6" fill="none" stroke="#d0d0d0" stroke-width="1.8"/></g></svg>
<div class="a" style="left:3691px;top:248px;width:140px;height:39px;background:#2f2f2f;"></div>
<svg class="a" style="left:3698.5px;top:263px;" width="15" height="9.5" viewBox="0 0 15 9.5"><path d="M0 0 H15 L7.5 9.5 Z" fill="#8a8a8a"/></svg>
<span class="t" style="left:3723.26px;top:259.68px;font-size:17.5px;line-height:17.5px;color:#d0d0d0;letter-spacing:-1.205px;font-weight:700;width:82.5px;overflow:hidden;">Graph Node</span>
<div class="a" style="left:3691px;top:287px;width:140px;height:51px;background:#1f1f1f;"></div>
<span class="t" style="left:3724.40px;top:306.03px;font-size:16.5px;line-height:16.5px;color:#b0b0b0;width:17px;overflow:hidden;">Comment</span>
<div class="a" style="left:3742.5px;top:287px;width:1.5px;height:51px;background:#2a2a2a;"></div>
<div class="a" style="left:3774px;top:287px;width:1.5px;height:51px;background:#2a2a2a;"></div>
<div class="a" style="left:3762px;top:290px;width:9px;height:46px;background:#0f0f0f;border:1.5px solid #383838;border-radius:5px;"></div>
<div class="a" style="left:3691px;top:337.5px;width:140px;height:1.5px;background:#151515;"></div>
<div class="a" style="left:3691px;top:339px;width:140px;height:39px;background:#2f2f2f;"></div>
<svg class="a" style="left:3698.5px;top:353.5px;" width="15" height="9.5" viewBox="0 0 15 9.5"><path d="M0 0 H15 L7.5 9.5 Z" fill="#8a8a8a"/></svg>
<span class="t" style="left:3723.26px;top:351.18px;font-size:17.5px;line-height:17.5px;color:#d0d0d0;letter-spacing:-1.371px;font-weight:700;">Comment</span>
<div class="a" style="left:3691px;top:378px;width:140px;height:41.39999999999998px;background:#1f1f1f;"></div>
<div class="a" style="left:3691px;top:417.9px;width:140px;height:1.5px;background:#151515;"></div>
<div class="a" style="left:3742.5px;top:378px;width:1.5px;height:39.89999999999998px;background:#2a2a2a;"></div>
<div class="a" style="left:3774px;top:378px;width:1.5px;height:39.89999999999998px;background:#2a2a2a;"></div>
<span class="t" style="left:3724.50px;top:390.15px;font-size:16px;line-height:16px;color:#b0b0b0;">...</span>
<svg class="a" style="left:3702px;top:392px;" width="9" height="15" viewBox="0 0 9 15"><path d="M0 0 L9 7.5 L0 15 Z" fill="#8a8a8a"/></svg>
<div class="a" style="left:3763.5px;top:386px;width:2px;height:26px;background:#383838;"></div>
<svg class="a" style="left:3782px;top:391px;" width="17" height="14" viewBox="0 0 17 14"><path d="M6 1 L1 6 L6 11 M1 6 H11 a5 4 0 0 1 0 8 H8" fill="none" stroke="#d0d0d0" stroke-width="1.8"/></svg>
<div class="a" style="left:3691px;top:419.4px;width:140px;height:40.60000000000002px;background:#1f1f1f;"></div>
<div class="a" style="left:3691px;top:458.5px;width:140px;height:1.5px;background:#151515;"></div>
<div class="a" style="left:3742.5px;top:419.4px;width:1.5px;height:39.10000000000002px;background:#2a2a2a;"></div>
<div class="a" style="left:3774px;top:419.4px;width:1.5px;height:39.10000000000002px;background:#2a2a2a;"></div>
<span class="t" style="left:3724.50px;top:431.15px;font-size:16px;line-height:16px;color:#b0b0b0;">...</span>
<div class="a" style="left:3762px;top:424.4px;width:9px;height:30px;background:#0f0f0f;border:1.5px solid #383838;border-radius:5px;"></div>
<div class="a" style="left:3691px;top:460px;width:140px;height:40.30000000000001px;background:#1f1f1f;"></div>
<div class="a" style="left:3691px;top:498.8px;width:140px;height:1.5px;background:#151515;"></div>
<div class="a" style="left:3742.5px;top:460px;width:1.5px;height:38.80000000000001px;background:#2a2a2a;"></div>
<div class="a" style="left:3774px;top:460px;width:1.5px;height:38.80000000000001px;background:#2a2a2a;"></div>
<span class="t" style="left:3724.50px;top:471.60px;font-size:16px;line-height:16px;color:#b0b0b0;">...</span>
<div class="a" style="left:3763px;top:467px;width:11px;height:26px;background:#0f0f0f;border:1.5px solid #383838;border-radius:4px 0 0 4px;border-right:none;"></div>
<svg class="a" style="left:3767px;top:476px;" width="7" height="7" viewBox="0 0 7 7"><path d="M0 0 L7 6" stroke="#2a8af0" stroke-width="3"/></svg>
<div class="a" style="left:3691px;top:500.3px;width:140px;height:39.69999999999999px;background:#1f1f1f;"></div>
<div class="a" style="left:3691px;top:538.5px;width:140px;height:1.5px;background:#151515;"></div>
<div class="a" style="left:3742.5px;top:500.3px;width:1.5px;height:38.19999999999999px;background:#2a2a2a;"></div>
<div class="a" style="left:3774px;top:500.3px;width:1.5px;height:38.19999999999999px;background:#2a2a2a;"></div>
<span class="t" style="left:3724.50px;top:511.60px;font-size:16px;line-height:16px;color:#b0b0b0;">...</span>
<div class="a" style="left:3763px;top:507.3px;width:11px;height:26px;background:#0f0f0f;border:1.5px solid #383838;border-radius:4px 0 0 4px;border-right:none;"></div>
<div class="a" style="left:3691px;top:540px;width:140px;height:41px;background:#1f1f1f;"></div>
<div class="a" style="left:3691px;top:579.5px;width:140px;height:1.5px;background:#151515;"></div>
<div class="a" style="left:3742.5px;top:540px;width:1.5px;height:39.5px;background:#2a2a2a;"></div>
<div class="a" style="left:3774px;top:540px;width:1.5px;height:39.5px;background:#2a2a2a;"></div>
<span class="t" style="left:3724.50px;top:551.95px;font-size:16px;line-height:16px;color:#b0b0b0;">...</span>
<div class="a" style="left:3762px;top:545px;width:9px;height:30px;background:#0f0f0f;border:1.5px solid #383838;border-radius:5px;"></div>
<div class="a" style="left:706px;top:1706px;width:2978px;height:46px;background:#151515;"></div>
<svg class="a" style="left:717px;top:1720.5px;" width="18" height="23.5" viewBox="0 0 18 23.5"><path d="M0 3 H18 V23.5 H0 Z" fill="#c0c0c0"/><rect x="2.5" y="0" width="2.5" height="5" fill="#c0c0c0"/><rect x="7.7" y="0" width="2.5" height="5" fill="#c0c0c0"/><rect x="13" y="0" width="2.5" height="5" fill="#c0c0c0"/><path d="M3 11 L7.5 14 L3 17" stroke="#151515" stroke-width="1.8" fill="none"/><path d="M9 18 H14" stroke="#151515" stroke-width="1.8"/></svg>
<span class="t" style="left:746.20px;top:1721.07px;font-size:20px;line-height:20px;color:#c0c0c0;letter-spacing:-0.023px;">Compiler Results</span>
<div class="a" style="left:949px;top:1714.5px;width:240px;height:38px;background:#242424;border-radius:6px 6px 0 0;"></div>
<svg class="a" style="left:958px;top:1722px;" width="22" height="22" viewBox="0 0 22 22"><circle cx="9" cy="9" r="7.6" fill="none" stroke="#c8c8c8" stroke-width="2"/><path d="M14.5 14.5 L21 21" stroke="#c8c8c8" stroke-width="2.4"/></svg>
<span class="t" style="left:989.40px;top:1721.07px;font-size:20px;line-height:20px;color:#c0c0c0;letter-spacing:-0.063px;">Find Results</span>
<svg class="a" style="left:1157.5px;top:1727.5px;" width="9.0" height="9.0" viewBox="0 0 9.0 9.0"><path d="M0 0 L9.0 9.0 M9.0 0 L0 9.0" stroke="#d0d0d0" stroke-width="2.4" fill="none"/></svg>
<div class="a" style="left:706px;top:1752px;width:2978px;height:53px;background:#242424;"></div>
<div class="a" style="left:722.5px;top:1763.5px;width:2869.5px;height:31px;background:#0f0f0f;border:1.5px solid #323232;border-radius:15.5px;"></div>
<svg class="a" style="left:729px;top:1768.5px;" width="22" height="22" viewBox="0 0 22 22"><circle cx="9" cy="9" r="7.6" fill="none" stroke="#c8c8c8" stroke-width="2"/><path d="M14.5 14.5 L21 21" stroke="#c8c8c8" stroke-width="2.4"/></svg>
<span class="t" style="left:762.40px;top:1767.37px;font-size:20px;line-height:20px;color:#5a5a5a;letter-spacing:-0.098px;">Enter function or event name to find references...</span>
<div class="a" style="left:3600px;top:1764.5px;width:65.5px;height:30px;background:#383838;border-radius:4px;border:1px solid #1c1c1c;"></div>
<svg class="a" style="left:3625px;top:1771px;" width="16" height="17" viewBox="0 0 16 17"><path d="M1 7 L3.5 1 H6 V7 Z M15 7 L12.5 1 H10 V7 Z" fill="#0a0a0a"/><rect x="0" y="7" width="6.5" height="10" rx="1" fill="#0a0a0a"/><rect x="9.5" y="7" width="6.5" height="10" rx="1" fill="#0a0a0a"/><rect x="6.5" y="4" width="3" height="5" fill="#0a0a0a"/></svg>
<div class="a" style="left:706px;top:191px;width:2978px;height:1515px;overflow:hidden;background:#5e8894;"><div class="a" style="left:-706px;top:-191px;width:3838px;height:1805px;">
<div class="a" style="left:706px;top:191px;width:2978px;height:254px;background:#5e8894;"></div>
<div class="a" style="left:706px;top:444.5px;width:2978px;height:6px;background:#6f9abb;"></div>
<div class="a" style="left:706px;top:517px;width:2978px;height:827px;background:#7196b7;"></div>
<div class="a" style="left:706px;top:1338px;width:2978px;height:6px;background:linear-gradient(180deg,rgba(90,120,160,0),rgba(90,120,160,.6));"></div>
<div class="a" style="left:706px;top:1344px;width:2978px;height:107px;background:#5f8997;box-shadow:inset 0 8px 8px -6px rgba(40,60,70,.45);"></div>
<div class="a" style="left:706px;top:1451px;width:2978px;height:5px;background:#638f98;"></div>
<div class="a" style="left:706px;top:1524.5px;width:2978px;height:181.5px;background:linear-gradient(180deg,#558584 0,#558584 60%,#4a7878 100%);"></div>
<div class="a" style="left:706px;top:191px;width:2978px;height:1515px;background-image:linear-gradient(90deg,rgba(255,255,255,.055) 1px,transparent 1px),linear-gradient(180deg,rgba(255,255,255,.055) 1px,transparent 1px),linear-gradient(90deg,rgba(0,0,0,.10) 1px,transparent 1px),linear-gradient(180deg,rgba(0,0,0,.10) 1px,transparent 1px);background-size:30px 30px,30px 30px,240px 240px,240px 240px;background-position:15.25px 0,0 5.25px,195.25px 0,0 5.25px;"></div>
<div class="a" style="left:706px;top:450px;width:2978px;height:67px;background:#6c77ad;box-shadow:inset 0 3px 3px -2px rgba(140,160,220,.6), inset 0 -3px 3px -2px rgba(60,70,120,.5);"></div>
<div class="a" style="left:706px;top:1456px;width:2978px;height:68.5px;background:#244a3c;"></div>
<span class="t" style="left:707.95px;top:462.71px;font-size:47px;line-height:47px;color:#f0f0f0;letter-spacing:-1.792px;font-weight:700;text-shadow:2.5px 2.5px 0 #1f2444;">&#x27;emitUIInteraction&#x27; call from frontend)</span>
<div class="a" style="left:706px;top:1584px;width:1100px;height:122px;background:#739a9a;"></div>
<div class="a" style="left:706px;top:1584px;width:1100px;height:5.5px;background:#86abab;"></div>
<div class="a" style="left:706px;top:1589.5px;width:1093px;height:67.5px;background:linear-gradient(180deg,#b4b4b4,#a4a4a4);box-shadow:inset 0 -2px 2px rgba(0,0,0,.12);"></div>
<span class="t" style="left:700.95px;top:1602.71px;font-size:47px;line-height:47px;color:#e4e4e4;letter-spacing:-2.178px;font-weight:700;text-shadow:3px 3px 0 #3a3a3a;">amera views</span>
<div class="a" style="left:706px;top:1691px;width:417px;height:15px;background:#86abab;"></div>
<div class="a" style="left:706px;top:1697px;width:411.5px;height:9px;background:linear-gradient(180deg,#b4b4b4,#a8a8a8);"></div>
<div class="a" style="left:1882.5px;top:1631px;width:1741px;height:80px;background:rgba(150,130,185,.42);"></div>
<div class="a" style="left:1888px;top:1636px;width:1729px;height:75px;background:linear-gradient(180deg,#ab4585,#9c3f7a);"></div>
<span class="t" style="left:1905.67px;top:1651.97px;font-size:43.5px;line-height:43.5px;color:#dcdcdc;letter-spacing:-0.631px;font-weight:700;text-shadow:2.5px 2.5px 0 #3d1230;">Send Json response back to frontend, to give a notice that this event was triggered</span>
<span class="t" style="left:3230.00px;top:1586.72px;font-size:96px;line-height:96px;color:rgba(255,255,255,.17);font-weight:700;transform-origin:0 0;transform:scaleX(0.7955);">BLUEPRINT</span>
<div class="a" style="left:806px;top:671px;width:700.5px;height:460px;background:#b2b6a2;border-radius:14px;box-shadow:0 0 3px rgba(178,182,162,.5);"></div>
<div class="a" style="left:812px;top:677px;width:688.5px;height:448.5px;background:#9fa392;border-radius:8px;"></div>
<div class="a" style="left:818px;top:682px;width:678px;height:439px;background:#6d829d;border-radius:3px;"></div>
<div class="a" style="left:818px;top:682px;width:678px;height:123px;background:#383838;"></div>
<span class="t" style="left:834.67px;top:696.97px;font-size:43.5px;line-height:43.5px;color:#f0f0f0;letter-spacing:-0.939px;font-weight:700;text-shadow:2.5px 2.5px 0 #0a0a0a;">Execute Console Command</span>
<span class="t" style="left:833.17px;top:751.97px;font-size:43.5px;line-height:43.5px;color:#f0f0f0;letter-spacing:0.771px;font-weight:700;text-shadow:2.5px 2.5px 0 #0a0a0a;">e.g. &#x27;r.setres 1920x1080w&#x27;</span>
<svg class="a" style="left:1472px;top:1097px;" width="24" height="24" viewBox="0 0 24 24"><path d="M0 24 L24 0 M8.64 24 L24 8.64 M16.799999999999997 24 L24 16.799999999999997" stroke="#f0f0f0" stroke-width="3.2" fill="none"/></svg>
<div class="a" style="left:1891px;top:615px;width:1741px;height:691px;background:#9c88b8;"></div>
<div class="a" style="left:1898px;top:622px;width:1727.5px;height:123px;background:#b04587;box-shadow:inset 0 2px 2px rgba(220,120,180,.35), inset 0 -2px 2px rgba(90,20,60,.25);"></div>
<span class="t" style="left:1914.67px;top:635.67px;font-size:43.5px;line-height:43.5px;color:#f0f0f0;letter-spacing:-0.577px;font-weight:700;text-shadow:2.5px 2.5px 0 #3d1230;">Send Json response back to frontend, to give a notice that this event was triggered</span>
<span class="t" style="left:1914.67px;top:690.17px;font-size:43.5px;line-height:43.5px;color:#f0f0f0;letter-spacing:-0.443px;font-weight:700;text-shadow:2.5px 2.5px 0 #3d1230;">and completed</span>
<svg class="a" style="left:3602px;top:1277px;" width="24" height="24" viewBox="0 0 24 24"><path d="M0 24 L24 0 M8.64 24 L24 8.64 M16.799999999999997 24 L24 16.799999999999997" stroke="#f0f0f0" stroke-width="3.2" fill="none"/></svg>
<svg class="a" style="left:0;top:0;filter:drop-shadow(1.5px 3px 2.5px rgba(40,30,60,.5));" width="3838" height="1805"><g fill="#cdfa5a"><path d="M2375 761 H2419.5 V773.4 H2379 Z"/><rect x="2431.0" y="761.0" width="36.0" height="12.4"/><rect x="2479.1" y="761.0" width="36.0" height="12.4"/><rect x="2527.2" y="761.0" width="36.0" height="12.4"/><rect x="2575.2" y="761.0" width="36.0" height="12.4"/><rect x="2623.3" y="761.0" width="36.0" height="12.4"/><rect x="2671.4" y="761.0" width="36.0" height="12.4"/><rect x="2719.5" y="761.0" width="36.0" height="12.4"/><rect x="2767.6" y="761.0" width="36.0" height="12.4"/><rect x="2815.6" y="761.0" width="36.0" height="12.4"/><rect x="2863.7" y="761.0" width="36.0" height="12.4"/><rect x="2911.8" y="761.0" width="36.0" height="12.4"/><rect x="2959.9" y="761.0" width="36.0" height="12.4"/><rect x="3008.0" y="761.0" width="36.0" height="12.4"/><rect x="3056.0" y="761.0" width="36.0" height="12.4"/><rect x="3104.1" y="761.0" width="36.0" height="12.4"/><rect x="3152.2" y="761.0" width="36.0" height="12.4"/><rect x="3200.3" y="761.0" width="36.0" height="12.4"/><rect x="3248.4" y="761.0" width="36.0" height="12.4"/><rect x="3296.4" y="761.0" width="36.0" height="12.4"/><rect x="3344.5" y="761.0" width="36.0" height="12.4"/><rect x="3392.6" y="761.0" width="36.0" height="12.4"/><rect x="3440.7" y="761.0" width="36.0" height="12.4"/><rect x="3488.8" y="761.0" width="36.0" height="12.4"/><rect x="3566.4" y="786.8" width="12.2" height="35.6"/><rect x="3566.4" y="834.7" width="12.2" height="35.6"/><rect x="3566.4" y="882.6" width="12.2" height="35.6"/><rect x="3566.4" y="930.5" width="12.2" height="35.6"/><rect x="3566.4" y="978.4" width="12.2" height="35.6"/><rect x="3566.4" y="1026.3" width="12.2" height="35.6"/><rect x="3566.4" y="1074.2" width="12.2" height="35.6"/><rect x="3566.4" y="1122.1" width="12.2" height="35.6"/><rect x="3566.4" y="1170.0" width="12.2" height="35.6"/><rect x="3566.4" y="1217.9" width="12.2" height="35.6"/><rect x="3566.4" y="1265.8" width="12.2" height="35.6"/><path d="M2369 1349 H2406.6 V1361.2 H2378 Q2372 1361.2 2369 1353 Z"/><rect x="2419.0" y="1349.0" width="36.0" height="12.2"/><rect x="2467.0" y="1349.0" width="36.0" height="12.2"/><rect x="2515.0" y="1349.0" width="36.0" height="12.2"/><rect x="2563.0" y="1349.0" width="36.0" height="12.2"/><rect x="2611.0" y="1349.0" width="36.0" height="12.2"/><rect x="2659.0" y="1349.0" width="36.0" height="12.2"/><rect x="2707.0" y="1349.0" width="36.0" height="12.2"/><rect x="2755.0" y="1349.0" width="36.0" height="12.2"/><rect x="2803.0" y="1349.0" width="36.0" height="12.2"/><rect x="2851.0" y="1349.0" width="36.0" height="12.2"/><rect x="2899.0" y="1349.0" width="36.0" height="12.2"/><rect x="2947.0" y="1349.0" width="36.0" height="12.2"/><rect x="2995.0" y="1349.0" width="36.0" height="12.2"/><rect x="3043.0" y="1349.0" width="36.0" height="12.2"/><rect x="3091.0" y="1349.0" width="36.0" height="12.2"/><rect x="3139.0" y="1349.0" width="36.0" height="12.2"/><rect x="3187.0" y="1349.0" width="36.0" height="12.2"/><rect x="3235.0" y="1349.0" width="36.0" height="12.2"/><rect x="3283.0" y="1349.0" width="36.0" height="12.2"/><rect x="3331.0" y="1349.0" width="36.0" height="12.2"/><rect x="3379.0" y="1349.0" width="36.0" height="12.2"/><rect x="3427.0" y="1349.0" width="36.0" height="12.2"/><rect x="3475.0" y="1349.0" width="36.0" height="12.2"/><path d="M3523 1349 H3558 L3560.5 1361.2 H3523 Z"/><path d="M2360.6 812.5 V784 Q2360.6 777 2365 775 L2373 777 V812.5 Z"/><rect x="2360.6" y="825.0" width="12.4" height="36.0"/><rect x="2360.6" y="873.0" width="12.4" height="36.0"/><rect x="2360.6" y="921.0" width="12.4" height="36.0"/><rect x="2360.6" y="969.0" width="12.4" height="36.0"/><rect x="2360.6" y="1017.0" width="12.4" height="36.0"/><rect x="2360.6" y="1065.0" width="12.4" height="36.0"/><rect x="2360.6" y="1113.0" width="12.4" height="36.0"/><rect x="2360.6" y="1161.0" width="12.4" height="36.0"/><rect x="2360.6" y="1209.0" width="12.4" height="36.0"/><rect x="2360.6" y="1257.0" width="12.4" height="36.0"/><rect x="2360.6" y="1305.0" width="12.4" height="35.8"/></g><g fill="none" stroke="#cdfa5a" stroke-width="12.2"><path d="M3537 767.2 H3558 Q3572.5 767.2 3572.5 778" /><path d="M3572.5 1313.7 V1336 Q3572.5 1347 3565 1352" /></g></svg>
<svg class="a" style="left:0;top:0;" width="3838" height="1805"><g stroke="#f4f4f4" stroke-width="3" fill="none"><path d="M700 932.5 H956"/><path d="M1336 932.8 H2006"/><path d="M2282 933.6 C2500 933.6 2800 934.3 3026 934.5"/></g><g stroke="#e81ec8" stroke-width="2" fill="none"><path d="M700 1097.2 L1100 1120.7 L1503.6 1144.3 L1891.5 1170.8 L2150 1184.2 L2366.7 1194 L2440 1197.2 L2486 1198"/><path d="M700 986 C800 985.5 880 984.5 956 984.5"/><path d="M2911 1141 C2992 1141 2945 1035 3026 1035"/></g><path d="M2924 1008 C2977 1008 2975 986 3026 986" stroke="#2aa0e8" stroke-width="2" fill="none"/><path d="M2231 1067.5 C2421 1067.5 1814 984 2004 984" stroke="#8a0a14" stroke-width="1.8" fill="none"/></svg>
<div class="a" style="left:932.3px;top:856.3px;width:428.7px;height:207.3px;background:#0e0e13;border-radius:12px;box-shadow:0 4px 8px rgba(0,0,0,.45),0 0 3px rgba(0,0,0,.5);"></div>
<div class="a" style="left:934.8px;top:858.8px;width:423.7px;height:202.3px;background:#1d2226;border-radius:9.5px;"></div>
<div class="a" style="left:934.8px;top:858.8px;width:423.7px;height:42.5px;background:linear-gradient(180deg,#76aad4 0,#4c83ae 9%,#4c83ae 70%,#447aa3 100%);border-radius:9.5px 9.5px 0 0;"></div>
<div class="a" style="left:934.8px;top:858.8px;width:423.7px;height:42.5px;background:radial-gradient(ellipse 46% 62% at 48% 50%,rgba(22,26,32,0.62) 0,rgba(22,26,32,0.46499999999999997) 55%,rgba(22,26,32,0) 100%);border-radius:9.5px 9.5px 0 0;"></div>
<div class="a" style="left:934.8px;top:858.8px;width:423.7px;height:42.5px;background:linear-gradient(90deg,rgba(24,26,32,0) 45%,rgba(24,26,32,.55) 100%);border-radius:9.5px 9.5px 0 0;"></div>
<div class="a" style="left:1983px;top:856.5px;width:324px;height:160.5px;background:#0e0e13;border-radius:12px;box-shadow:0 4px 8px rgba(0,0,0,.45),0 0 3px rgba(0,0,0,.5);"></div>
<div class="a" style="left:1985.5px;top:859.0px;width:319px;height:155.5px;background:#24242a;border-radius:9.5px;"></div>
<div class="a" style="left:1985.5px;top:859.0px;width:319px;height:42.5px;background:linear-gradient(180deg,#c4c4c4 0,#8e8e8e 9%,#8e8e8e 70%,#7c7c7c 100%);border-radius:9.5px 9.5px 0 0;"></div>
<div class="a" style="left:1985.5px;top:859.0px;width:319px;height:42.5px;background:radial-gradient(ellipse 46% 62% at 48% 50%,rgba(22,26,32,0.5) 0,rgba(22,26,32,0.375) 55%,rgba(22,26,32,0) 100%);border-radius:9.5px 9.5px 0 0;"></div>
<div class="a" style="left:1985.5px;top:859.0px;width:319px;height:42.5px;background:linear-gradient(90deg,rgba(24,26,32,0) 45%,rgba(24,26,32,.55) 100%);border-radius:9.5px 9.5px 0 0;"></div>
<div class="a" style="left:1983px;top:1037px;width:274px;height:63px;background:#1a1a24;border-radius:31.5px;box-shadow:0 4px 7px rgba(0,0,0,.45);"></div>
<div class="a" style="left:1985.5px;top:1039.5px;width:269px;height:57.5px;background:linear-gradient(180deg,#c4c4d0 0,#908ea4 6%,#73708a 35%,#615e78 75%,#6a6780 100%);border-radius:29.0px;"></div>
<div class="a" style="left:1985.5px;top:1041px;width:269px;height:55px;background:radial-gradient(ellipse 36% 58% at 50% 16%,rgba(170,72,80,.7) 0,rgba(170,72,80,.7) 25%,transparent 100%);border-radius:29.0px;"></div>
<div class="a" style="left:2642.7px;top:976.3px;width:308.3px;height:64px;background:#1a1a24;border-radius:32.0px;box-shadow:0 4px 7px rgba(0,0,0,.45);"></div>
<div class="a" style="left:2645.2px;top:978.8px;width:303.3px;height:58.5px;background:linear-gradient(180deg,#c4c4d0 0,#908ea4 6%,#73708a 35%,#615e78 75%,#6a6780 100%);border-radius:29.5px;"></div>
<div class="a" style="left:2645.2px;top:980.3px;width:303.3px;height:56px;background:radial-gradient(ellipse 36% 58% at 50% 16%,rgba(60,144,210,.78) 0,rgba(60,144,210,.78) 25%,transparent 100%);border-radius:29.5px;"></div>
<div class="a" style="left:3002.8px;top:826.3px;width:477px;height:239.5px;background:#0e0e13;border-radius:12px;box-shadow:0 4px 8px rgba(0,0,0,.45),0 0 3px rgba(0,0,0,.5);"></div>
<div class="a" style="left:3005.3px;top:828.8px;width:472px;height:234.5px;background:#24242a;border-radius:9.5px;"></div>
<div class="a" style="left:3005.3px;top:828.8px;width:472px;height:75.0px;background:linear-gradient(180deg,#6ea2cc 0,#4a7ea8 9%,#4a7ea8 70%,#44779e 100%);border-radius:9.5px 9.5px 0 0;"></div>
<div class="a" style="left:3005.3px;top:828.8px;width:472px;height:75.0px;background:radial-gradient(ellipse 46% 62% at 48% 50%,rgba(22,26,32,0.72) 0,rgba(22,26,32,0.54) 55%,rgba(22,26,32,0) 100%);border-radius:9.5px 9.5px 0 0;"></div>
<div class="a" style="left:3005.3px;top:828.8px;width:472px;height:75.0px;background:linear-gradient(90deg,rgba(24,26,32,0) 45%,rgba(24,26,32,.55) 100%);border-radius:9.5px 9.5px 0 0;"></div>
<div class="a" style="left:2463px;top:1066.8px;width:471.6px;height:218.8px;background:#0e0e13;border-radius:12px;box-shadow:0 4px 8px rgba(0,0,0,.45),0 0 3px rgba(0,0,0,.5);"></div>
<div class="a" style="left:2465.5px;top:1069.3px;width:466.6px;height:213.8px;background:#24242a;border-radius:9.5px;"></div>
<div class="a" style="left:2465.5px;top:1069.3px;width:466.6px;height:42.5px;background:linear-gradient(180deg,#9cc690 0,#6f9a66 9%,#6f9a66 70%,#62895a 100%);border-radius:9.5px 9.5px 0 0;"></div>
<div class="a" style="left:2465.5px;top:1069.3px;width:466.6px;height:42.5px;background:radial-gradient(ellipse 46% 62% at 48% 50%,rgba(22,26,32,0.68) 0,rgba(22,26,32,0.51) 55%,rgba(22,26,32,0) 100%);border-radius:9.5px 9.5px 0 0;"></div>
<div class="a" style="left:2465.5px;top:1069.3px;width:466.6px;height:42.5px;background:linear-gradient(90deg,rgba(24,26,32,0) 45%,rgba(24,26,32,.55) 100%);border-radius:9.5px 9.5px 0 0;"></div>
<svg class="a" style="left:0;top:0;opacity:.22;" width="3838" height="1805"><g stroke="#f4f4f4" stroke-width="3" fill="none"><path d="M700 932.5 H956"/><path d="M1336 932.8 H2006"/><path d="M2282 933.6 C2500 933.6 2800 934.3 3026 934.5"/></g><g stroke="#e81ec8" stroke-width="2" fill="none"><path d="M700 1097.2 L1100 1120.7 L1503.6 1144.3 L1891.5 1170.8 L2150 1184.2 L2366.7 1194 L2440 1197.2 L2486 1198"/><path d="M700 986 C800 985.5 880 984.5 956 984.5"/><path d="M2911 1141 C2992 1141 2945 1035 3026 1035"/></g><path d="M2924 1008 C2977 1008 2975 986 3026 986" stroke="#2aa0e8" stroke-width="2" fill="none"/><path d="M2231 1067.5 C2421 1067.5 1814 984 2004 984" stroke="#8a0a14" stroke-width="1.8" fill="none"/></svg>
<span class="t" style="left:956.00px;top:866.49px;font-size:26px;line-height:26px;color:#86c8ff;font-style:italic;font-family:'DejaVu Serif','Liberation Serif',serif;">ƒ</span>
<span class="t" style="left:987.04px;top:868.08px;font-size:24px;line-height:24px;color:#cfcfcf;letter-spacing:-0.371px;font-weight:700;">Execute Console Command</span>
<svg class="a" style="left:954px;top:919.5px;" width="23" height="27" viewBox="0 0 23 27"><path d="M2 1 H11 Q12.5 1 13.5 2 L21.5 12 Q22.5 13.5 21.5 15 L13.5 25 Q12.5 26 11 26 H2 Q1 26 1 25 V2 Q1 1 2 1 Z" fill="#ffffff"/></svg>
<svg class="a" style="left:1316px;top:919.5px;" width="23" height="27" viewBox="0 0 23 27"><path d="M2 1 H11 Q12.5 1 13.5 2 L21.5 12 Q22.5 13.5 21.5 15 L13.5 25 Q12.5 26 11 26 H2 Q1 26 1 25 V2 Q1 1 2 1 Z" fill="#ffffff"/></svg>
<svg class="a" style="left:953.7px;top:973.6999999999999px;" width="29" height="21.4" viewBox="0 0 29 21.4"><circle cx="10.7" cy="10.7" r="10.6" fill="#ff10d8"/><path d="M21.5 5.6 L28 10.7 L21.5 15.8 Z" fill="#ff10d8"/></svg>
<span class="t" style="left:991.47px;top:973.50px;font-size:23.5px;line-height:23.5px;color:#f4f4f4;letter-spacing:-0.012px;">Command</span>
<svg class="a" style="left:953.7px;top:1023.0999999999999px;" width="29" height="21.4" viewBox="0 0 29 21.4"><circle cx="10.7" cy="10.7" r="8.3" fill="#14161a" stroke="#1b9ad8" stroke-width="4.6"/><path d="M21.5 5.6 L28 10.7 L21.5 15.8 Z" fill="#1b9ad8"/></svg>
<span class="t" style="left:991.47px;top:1022.50px;font-size:23.5px;line-height:23.5px;color:#f4f4f4;letter-spacing:0.059px;">Specific Player</span>
<svg class="a" style="left:2002.5px;top:866px;" width="27" height="29" viewBox="0 0 27 29"><path d="M0 14.5 H7 M7 5.5 V23.5 M7 5.5 H19 M7 23.5 H19" stroke="#fff" stroke-width="3" fill="none"/><path d="M18 0 L27 5.5 L18 11 Z M18 18 L27 23.5 L18 29 Z" fill="#fff"/></svg>
<span class="t" style="left:2037.24px;top:868.08px;font-size:24px;line-height:24px;color:#cfcfcf;letter-spacing:-0.385px;font-weight:700;">Branch</span>
<svg class="a" style="left:2004.5px;top:920.1px;" width="23" height="27" viewBox="0 0 23 27"><path d="M2 1 H11 Q12.5 1 13.5 2 L21.5 12 Q22.5 13.5 21.5 15 L13.5 25 Q12.5 26 11 26 H2 Q1 26 1 25 V2 Q1 1 2 1 Z" fill="#ffffff"/></svg>
<span class="t" style="left:2205.27px;top:922.50px;font-size:23.5px;line-height:23.5px;color:#f4f4f4;letter-spacing:-0.007px;">True</span>
<svg class="a" style="left:2262px;top:920.1px;" width="23" height="27" viewBox="0 0 23 27"><path d="M2 1 H11 Q12.5 1 13.5 2 L21.5 12 Q22.5 13.5 21.5 15 L13.5 25 Q12.5 26 11 26 H2 Q1 26 1 25 V2 Q1 1 2 1 Z" fill="#ffffff"/></svg>
<svg class="a" style="left:2003.7px;top:973.3px;" width="29" height="21.4" viewBox="0 0 29 21.4"><circle cx="10.7" cy="10.7" r="10.6" fill="#a00000"/><path d="M21.5 5.6 L28 10.7 L21.5 15.8 Z" fill="#a00000"/></svg>
<span class="t" style="left:2040.97px;top:972.90px;font-size:23.5px;line-height:23.5px;color:#f4f4f4;letter-spacing:0.281px;">Condition</span>
<span class="t" style="left:2194.97px;top:972.90px;font-size:23.5px;line-height:23.5px;color:#f4f4f4;letter-spacing:0.071px;">False</span>
<svg class="a" style="left:2262px;top:970.5px;" width="23" height="27" viewBox="0 0 23 27"><path d="M2 1 H11 Q12.5 1 13.5 2 L21.5 12 Q22.5 13.5 21.5 15 L13.5 25 Q12.5 26 11 26 H2 Q1 26 1 25 V2 Q1 1 2 1 Z" fill="#15151a" stroke="#ffffff" stroke-width="2.4" transform="translate(1.2 1.3) scale(0.9)"/></svg>
<span class="t" style="left:2015.47px;top:1056.90px;font-size:23.5px;line-height:23.5px;color:#f4f4f4;letter-spacing:0.004px;">App Is Streaming</span>
<svg class="a" style="left:2203.6px;top:1057.3px;" width="29" height="21.4" viewBox="0 0 29 21.4"><circle cx="10.7" cy="10.7" r="10.6" fill="#a00000"/><path d="M21.5 5.6 L28 10.7 L21.5 15.8 Z" fill="#a00000"/></svg>
<span class="t" style="left:2675.07px;top:996.90px;font-size:23.5px;line-height:23.5px;color:#f4f4f4;letter-spacing:0.016px;">Pixel Streamer Input</span>
<svg class="a" style="left:2897.5px;top:997.3px;" width="29" height="21.4" viewBox="0 0 29 21.4"><circle cx="10.7" cy="10.7" r="10.6" fill="#08a6f4"/><path d="M21.5 5.6 L28 10.7 L21.5 15.8 Z" fill="#08a6f4"/></svg>
<span class="t" style="left:3026.50px;top:837.49px;font-size:26px;line-height:26px;color:#86c8ff;font-style:italic;font-family:'DejaVu Serif','Liberation Serif',serif;">ƒ</span>
<span class="t" style="left:3057.04px;top:838.98px;font-size:24px;line-height:24px;color:#cfcfcf;letter-spacing:-0.307px;font-weight:700;">Send Pixel Streaming Response</span>
<span class="t" style="left:3057.14px;top:871.95px;font-size:22.5px;line-height:22.5px;color:#a4b498;letter-spacing:0.552px;font-style:italic;">Target is Pixel Streaming Input</span>
<svg class="a" style="left:3024.7px;top:921.0px;" width="23" height="27" viewBox="0 0 23 27"><path d="M2 1 H11 Q12.5 1 13.5 2 L21.5 12 Q22.5 13.5 21.5 15 L13.5 25 Q12.5 26 11 26 H2 Q1 26 1 25 V2 Q1 1 2 1 Z" fill="#ffffff"/></svg>
<svg class="a" style="left:3434.3px;top:921.0px;" width="23" height="27" viewBox="0 0 23 27"><path d="M2 1 H11 Q12.5 1 13.5 2 L21.5 12 Q22.5 13.5 21.5 15 L13.5 25 Q12.5 26 11 26 H2 Q1 26 1 25 V2 Q1 1 2 1 Z" fill="#15151a" stroke="#ffffff" stroke-width="2.4" transform="translate(1.2 1.3) scale(0.9)"/></svg>
<svg class="a" style="left:3024.7px;top:975.3px;" width="29" height="21.4" viewBox="0 0 29 21.4"><circle cx="10.7" cy="10.7" r="10.6" fill="#08a6f4"/><path d="M21.5 5.6 L28 10.7 L21.5 15.8 Z" fill="#08a6f4"/></svg>
<span class="t" style="left:3061.17px;top:974.90px;font-size:23.5px;line-height:23.5px;color:#f4f4f4;letter-spacing:0.584px;">Target</span>
<svg class="a" style="left:3024.7px;top:1024.1px;" width="29" height="21.4" viewBox="0 0 29 21.4"><circle cx="10.7" cy="10.7" r="10.6" fill="#ff10d8"/><path d="M21.5 5.6 L28 10.7 L21.5 15.8 Z" fill="#ff10d8"/></svg>
<span class="t" style="left:3061.17px;top:1023.70px;font-size:23.5px;line-height:23.5px;color:#f4f4f4;letter-spacing:0.234px;">Descriptor</span>
<span class="t" style="left:2486.50px;top:1076.49px;font-size:26px;line-height:26px;color:#a6ee96;font-style:italic;font-family:'DejaVu Serif','Liberation Serif',serif;">ƒ</span>
<span class="t" style="left:2517.24px;top:1078.18px;font-size:24px;line-height:24px;color:#cfcfcf;letter-spacing:-0.641px;font-weight:700;">Append</span>
<svg class="a" style="left:2483.7px;top:1134.5px;" width="29" height="21.4" viewBox="0 0 29 21.4"><circle cx="10.7" cy="10.7" r="8.3" fill="#14161a" stroke="#ff10d8" stroke-width="4.6"/><path d="M21.5 5.6 L28 10.7 L21.5 15.8 Z" fill="#ff10d8"/></svg>
<span class="t" style="left:2521.47px;top:1134.10px;font-size:23.5px;line-height:23.5px;color:#f4f4f4;">A</span>
<div class="a" style="left:2546.5px;top:1128.7px;width:149px;height:34.3px;background:#1a1a1e;border:2px solid #a8a8a8;border-radius:4px;"></div>
<span class="t" style="left:2554.47px;top:1134.10px;font-size:23.5px;line-height:23.5px;color:#d0d0d0;letter-spacing:-0.046px;">{ &quot;console&quot;: &quot;</span>
<span class="t" style="left:2740.27px;top:1129.90px;font-size:23.5px;line-height:23.5px;color:#f4f4f4;letter-spacing:0.033px;">Return Value</span>
<svg class="a" style="left:2884.3px;top:1130.3px;" width="29" height="21.4" viewBox="0 0 29 21.4"><circle cx="10.7" cy="10.7" r="10.6" fill="#ff10d8"/><path d="M21.5 5.6 L28 10.7 L21.5 15.8 Z" fill="#ff10d8"/></svg>
<svg class="a" style="left:2483.7px;top:1187.3px;" width="29" height="21.4" viewBox="0 0 29 21.4"><circle cx="10.7" cy="10.7" r="10.6" fill="#ff10d8"/><path d="M21.5 5.6 L28 10.7 L21.5 15.8 Z" fill="#ff10d8"/></svg>
<span class="t" style="left:2521.47px;top:1186.90px;font-size:23.5px;line-height:23.5px;color:#f4f4f4;">B</span>
<span class="t" style="left:2788.47px;top:1194.40px;font-size:23.5px;line-height:23.5px;color:#f4f4f4;letter-spacing:0.831px;">Add pin</span>
<svg class="a" style="left:2887px;top:1191.5px;" width="28" height="28" viewBox="0 0 28 28"><circle cx="14" cy="14" r="12.3" fill="none" stroke="#fff" stroke-width="2.6"/><path d="M14 7.5 V20.5 M7.5 14 H20.5" stroke="#fff" stroke-width="2.6"/></svg>
<svg class="a" style="left:2483.7px;top:1241.0px;" width="29" height="21.4" viewBox="0 0 29 21.4"><circle cx="10.7" cy="10.7" r="8.3" fill="#14161a" stroke="#ff10d8" stroke-width="4.6"/><path d="M21.5 5.6 L28 10.7 L21.5 15.8 Z" fill="#ff10d8"/></svg>
<span class="t" style="left:2521.47px;top:1240.60px;font-size:23.5px;line-height:23.5px;color:#f4f4f4;">C</span>
<div class="a" style="left:2546.5px;top:1236px;width:41.3px;height:32px;background:#1a1a1e;border:2px solid #a8a8a8;border-radius:4px;"></div>
<span class="t" style="left:2554.97px;top:1240.60px;font-size:23.5px;line-height:23.5px;color:#d0d0d0;letter-spacing:0.366px;">&quot; }</span>
<div class="a" style="left:706px;top:191px;width:80px;height:1515px;background:linear-gradient(90deg,rgba(18,28,40,.46) 0,rgba(18,28,40,.2) 40%,rgba(18,28,40,0) 100%);"></div>
<div class="a" style="left:3604px;top:191px;width:80px;height:1515px;background:linear-gradient(270deg,rgba(18,28,40,.46) 0,rgba(18,28,40,.2) 40%,rgba(18,28,40,0) 100%);"></div>
<div class="a" style="left:706px;top:1636px;width:2978px;height:70px;background:linear-gradient(0deg,rgba(18,28,40,.34) 0,rgba(18,28,40,.12) 50%,rgba(18,28,40,0) 100%);"></div>
<div class="a" style="left:706px;top:247px;width:2978px;height:26px;background:linear-gradient(180deg,rgba(18,28,40,.16) 0,rgba(18,28,40,0) 100%);"></div>
<div class="a" style="left:706px;top:191px;width:2978px;height:56.5px;background:linear-gradient(180deg,rgba(18,24,30,.7),rgba(18,24,30,.63));"></div>
<svg class="a" style="left:717.5px;top:207px;" width="18" height="24" viewBox="0 0 18 24"><path d="M0 0 H11 V3 H3 V18 H0 Z" fill="#7f8e94"/><path d="M5 4 H17 V24 L11 18.5 L5 24 Z" fill="#d0d4d6"/></svg>
<svg class="a" style="left:747px;top:213px;" width="14" height="9" viewBox="0 0 14 9"><path d="M1 1 L7 7.5 L13 1" stroke="#c0c6c8" stroke-width="2" fill="none"/></svg>
<div class="a" style="left:775px;top:194px;width:5px;height:50.5px;background:#171c1f;"></div>
<div class="a" style="left:893.5px;top:194px;width:5px;height:50.5px;background:#171c1f;"></div>
<svg class="a" style="left:792px;top:205px;" width="28" height="26" viewBox="0 0 28 26"><path d="M0 13 L13 0 V8 H28 V18 H13 V26 Z" fill="#8da0a8"/></svg>
<svg class="a" style="left:851px;top:205px;" width="28" height="26" viewBox="0 0 28 26"><path d="M28 13 L15 0 V8 H0 V18 H15 V26 Z" fill="#8da0a8"/></svg>
<svg class="a" style="left:915px;top:204px;" width="32" height="29" viewBox="0 0 22 22"><rect x="0" y="0" width="10" height="9" rx="1.5" fill="#c8ccce"/><rect x="15" y="2" width="7" height="5" rx="1" fill="#c8ccce"/><rect x="1.5" y="16" width="6.5" height="5.5" rx="1" fill="#c8ccce"/><rect x="15" y="14.5" width="7" height="5.5" rx="1" fill="#c8ccce"/><path d="M10 4.5 H15 M4.8 9 V16 M9 8 L15.5 16" stroke="#c8ccce" stroke-width="1.4" fill="none"/></svg>
<span class="t" style="left:969.08px;top:203.72px;font-size:29.5px;line-height:29.5px;color:#8fa3aa;letter-spacing:-0.883px;">BP_Arcware_Player_Controller</span>
<svg class="a" style="left:1362.5px;top:206px;" width="15" height="25" viewBox="0 0 15 25"><path d="M2 1.5 L13 12.5 L2 23.5" stroke="#c0c8cc" stroke-width="3" fill="none"/></svg>
<span class="t" style="left:1390.08px;top:203.72px;font-size:29.5px;line-height:29.5px;color:#8fa3aa;letter-spacing:-1.099px;">Event Graph</span>
<span class="t" style="left:3566.60px;top:202.60px;font-size:30px;line-height:30px;color:rgba(255,255,255,.14);font-weight:700;transform-origin:0 0;transform:scaleX(0.8567);">Zoom +1</span>
</div></div>
</body></html>
